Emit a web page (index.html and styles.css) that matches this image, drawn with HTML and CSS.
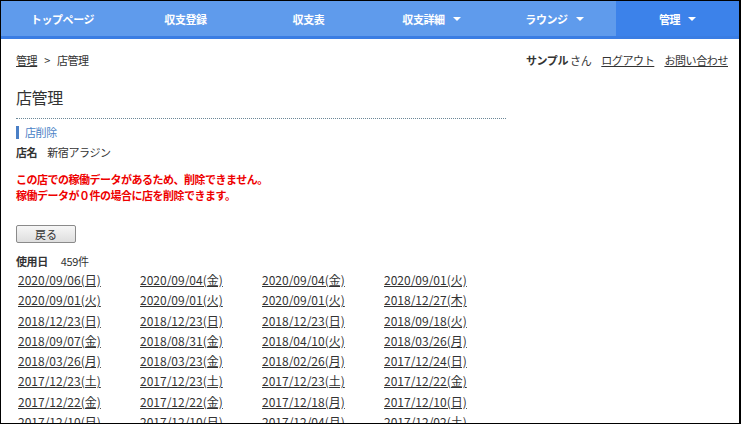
FILE: index.html
```html
<!DOCTYPE html>
<html>
<head>
    <meta charset="UTF-8">
    <title>店管理</title>
    <link rel="stylesheet" href="styles.css">
</head>
<body>
<div class="frame">
    <div class="nav">
        <a class="nav-item" href="#">トップページ</a>
        <a class="nav-item" href="#">収支登録</a>
        <a class="nav-item" href="#">収支表</a>
        <a class="nav-item" href="#">収支詳細 <span class="caret"></span></a>
        <a class="nav-item" href="#">ラウンジ <span class="caret"></span></a>
        <a class="nav-item active" href="#">管理 <span class="caret"></span></a>
    </div>

    <div class="topbar">
        <div class="breadcrumb">
            <a href="#">管理</a><span class="sep">&gt;</span>店管理
        </div>
        <div class="user">
            <b>サンプル</b> さん
            <a href="#">ログアウト</a>
            <a href="#">お問い合わせ</a>
        </div>
    </div>

    <div class="content">
        <h1 class="page-title">店管理</h1>

        <div class="section-title">店削除</div>
        <div class="shop-row"><b>店名</b><span>新宿アラジン</span></div>

        <p class="error">
            この店での稼働データがあるため、削除できません。<br>
            稼働データが０件の場合に店を削除できます。
        </p>

        <button class="btn" type="button">戻る</button>

        <div class="count-row"><b>使用日</b><span>459件</span></div>

        <div class="dates">
            <a href="#">2020/09/06(日)</a>
            <a href="#">2020/09/04(金)</a>
            <a href="#">2020/09/04(金)</a>
            <a href="#">2020/09/01(火)</a>
            <a href="#">2020/09/01(火)</a>
            <a href="#">2020/09/01(火)</a>
            <a href="#">2020/09/01(火)</a>
            <a href="#">2018/12/27(木)</a>
            <a href="#">2018/12/23(日)</a>
            <a href="#">2018/12/23(日)</a>
            <a href="#">2018/12/23(日)</a>
            <a href="#">2018/09/18(火)</a>
            <a href="#">2018/09/07(金)</a>
            <a href="#">2018/08/31(金)</a>
            <a href="#">2018/04/10(火)</a>
            <a href="#">2018/03/26(月)</a>
            <a href="#">2018/03/26(月)</a>
            <a href="#">2018/03/23(金)</a>
            <a href="#">2018/02/26(月)</a>
            <a href="#">2017/12/24(日)</a>
            <a href="#">2017/12/23(土)</a>
            <a href="#">2017/12/23(土)</a>
            <a href="#">2017/12/23(土)</a>
            <a href="#">2017/12/22(金)</a>
            <a href="#">2017/12/22(金)</a>
            <a href="#">2017/12/22(金)</a>
            <a href="#">2017/12/18(月)</a>
            <a href="#">2017/12/10(日)</a>
            <a href="#">2017/12/10(日)</a>
            <a href="#">2017/12/10(日)</a>
            <a href="#">2017/12/04(月)</a>
            <a href="#">2017/12/02(土)</a>
        </div>
    </div>
</div>
</body>
</html>
```

FILE: styles.css
```css
html, body {
    margin: 0;
    padding: 0;
}

body {
    font-family: "Noto Sans CJK JP", "Noto Sans", sans-serif;
    font-size: 11px;
    letter-spacing: -0.4px;
    color: #333;
    background-color: #fff;
}

.frame {
    height: 424px;
    box-sizing: border-box;
    border: 1px solid #000;
    border-right-width: 2px;
    overflow: hidden;
}

/* ナビゲーション */
.nav {
    display: grid;
    grid-template-columns: repeat(6, 1fr);
    height: 35px;
    background-color: #5f9bec;
    border-bottom: 3px solid #3a7de3;
}

.nav-item {
    display: flex;
    align-items: center;
    justify-content: center;
    color: #fff;
    font-size: 11px;
    font-weight: bold;
    text-decoration: none;
}

.nav-item.active {
    background-color: #3c82ea;
}

.caret {
    display: inline-block;
    width: 0;
    height: 0;
    margin-left: 8px;
    border-left: 4px solid transparent;
    border-right: 4px solid transparent;
    border-top: 4px solid #fff;
}

/* パンくず・ユーザー */
.topbar {
    display: flex;
    justify-content: space-between;
    padding: 12px 11px 0 15px;
    line-height: 18px;
}

.breadcrumb a {
    color: #333;
}

.breadcrumb .sep {
    margin: 0 7px;
}

.user a {
    color: #333;
    margin-left: 8px;
}

.content {
    width: 490px;
    padding-left: 15px;
}

.page-title {
    font-size: 16px;
    font-weight: normal;
    margin: 16px 0 0;
    padding-bottom: 9px;
    line-height: 24px;
    border-bottom: 1px dotted #6b8797;
}

.section-title {
    margin-top: 7px;
    padding-left: 6px;
    border-left: 3px solid #4a7fc6;
    color: #4a7fc6;
    font-size: 11px;
    line-height: 13px;
}

.shop-row,
.count-row {
    line-height: 18px;
    margin-top: 4px;
}

.shop-row b {
    margin-right: 10px;
}

.count-row b {
    margin-right: 13px;
}

.error {
    margin: 10px 0 0;
    color: #e00;
    font-weight: bold;
    letter-spacing: -0.5px;
    line-height: 16px;
}

.btn {
    display: block;
    margin-top: 22px;
    width: 60px;
    height: 18px;
    padding: 0;
    font-family: inherit;
    font-size: 11px;
    color: #333;
    background: linear-gradient(#f6f6f6, #dedede);
    border: 1px solid #8a8a8a;
    border-radius: 2px;
}

.count-row {
    margin-top: 9px;
}

.dates {
    display: grid;
    grid-template-columns: repeat(4, 122px);
    padding-left: 2px;
}

.dates a {
    color: #333;
    font-size: 12px;
    letter-spacing: 0;
    line-height: 20.3px;
}
```
